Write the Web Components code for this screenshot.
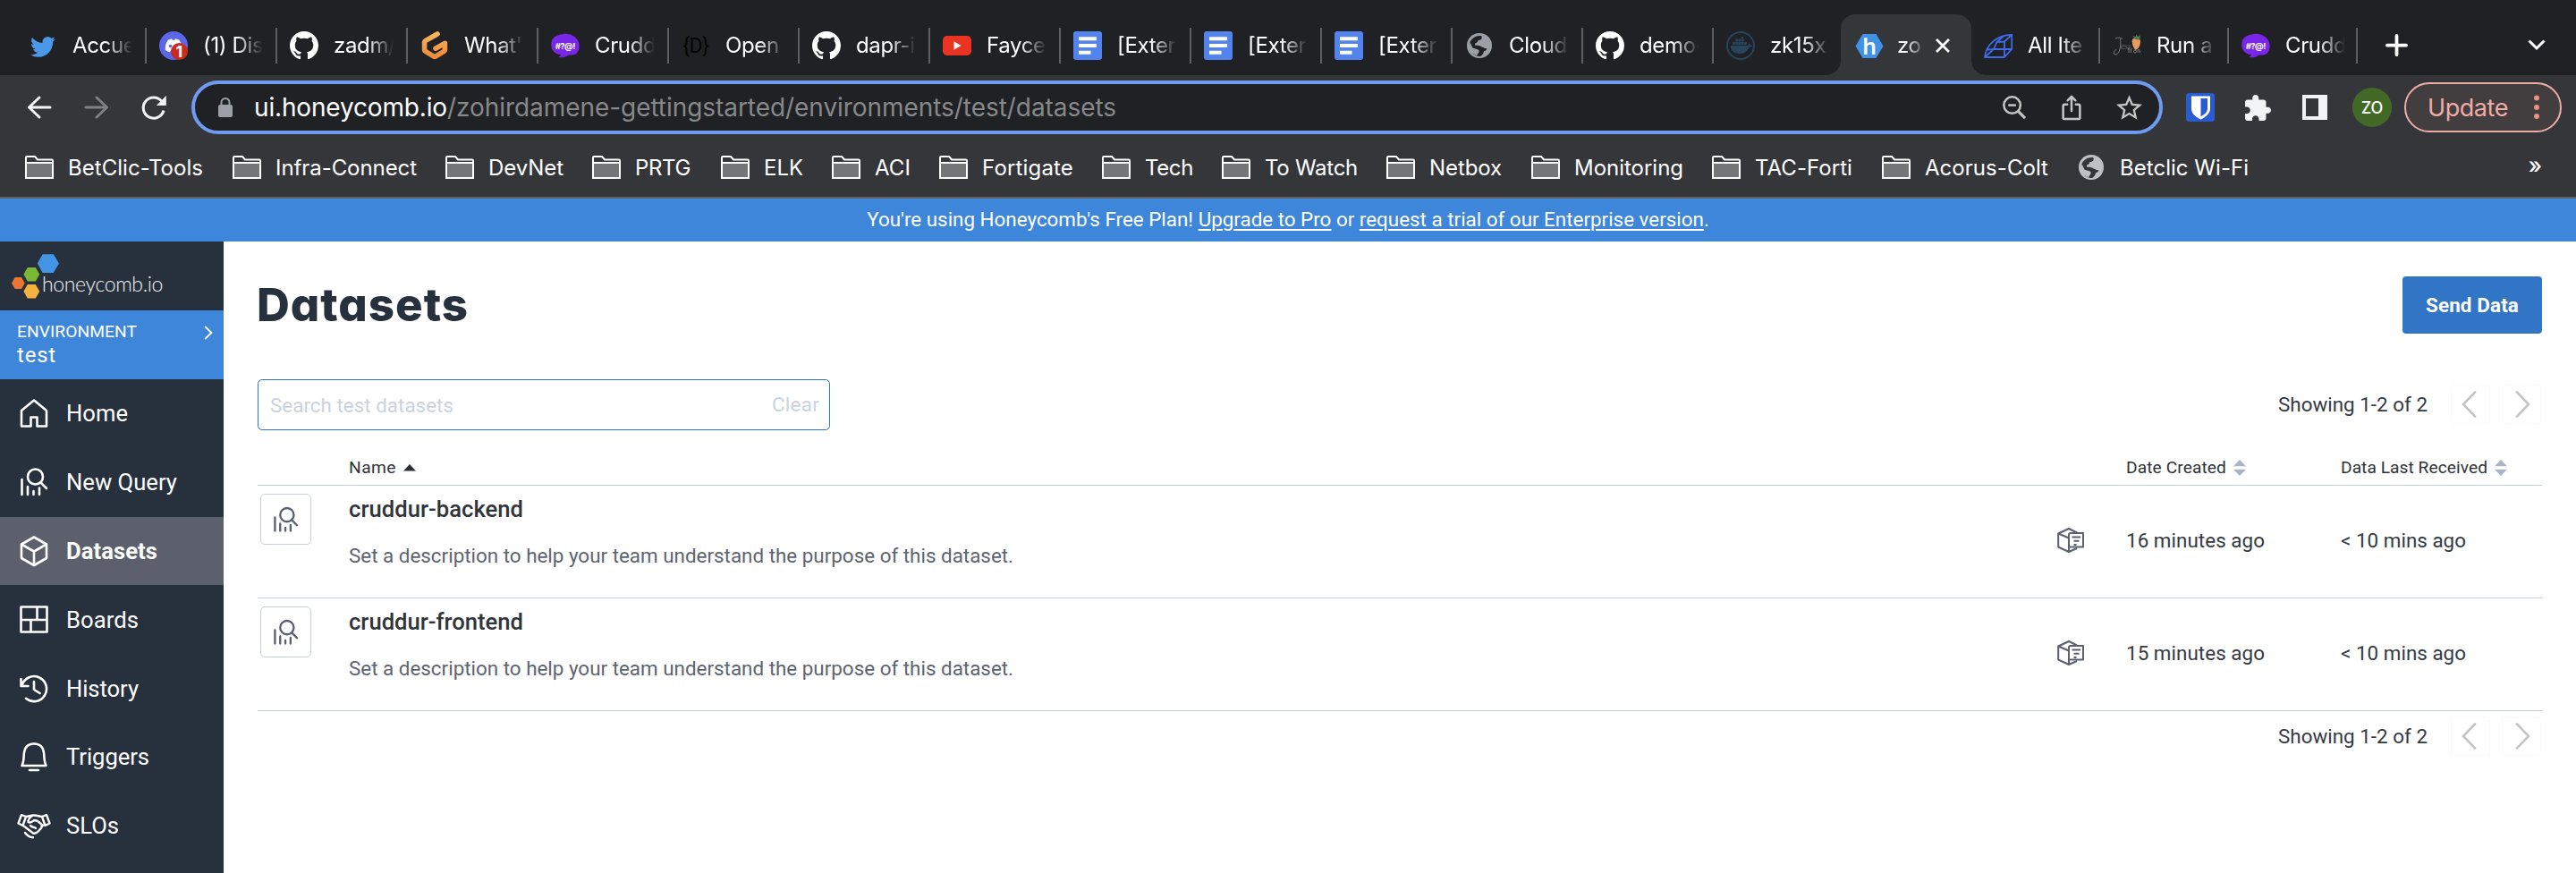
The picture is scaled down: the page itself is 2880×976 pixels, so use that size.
<!DOCTYPE html>
<html lang="en">
<head>
<meta charset="utf-8">
<title>Datasets | Honeycomb</title>
<style>
html,body{margin:0;padding:0;width:2880px;height:976px;overflow:hidden;background:#fff;font-family:Roboto,"Liberation Sans",sans-serif}
</style>
</head>
<body>
<honey-screen></honey-screen>
<script>
const ICONS = {
twitter:['0 0 32 32','<path transform="translate(2 3.4) scale(1.165)" fill="#4a99e9" d="M23.953 4.57a10 10 0 01-2.825.775 4.958 4.958 0 002.163-2.723c-.951.555-2.005.959-3.127 1.184a4.92 4.92 0 00-8.384 4.482C7.69 8.095 4.067 6.13 1.64 3.162a4.822 4.822 0 00-.666 2.475c0 1.71.87 3.213 2.188 4.096a4.904 4.904 0 01-2.228-.616v.06a4.923 4.923 0 003.946 4.827 4.996 4.996 0 01-2.212.085 4.936 4.936 0 004.604 3.417 9.867 9.867 0 01-6.102 2.105c-.39 0-.779-.023-1.17-.067a13.995 13.995 0 007.557 2.209c9.053 0 13.998-7.496 13.998-13.985 0-.21 0-.42-.015-.63A9.935 9.935 0 0024 4.59z"/>'],
discord:['0 0 32 32','<circle cx="16" cy="16" r="16" fill="#5b66ea"/><path fill="#fff" d="M10 9.5l4-1.2.8 1.4h2.6l.8-1.4 4 1.2c2.400 3.500 3.300 7 3 11.500-2 1.500-3.600 2-5 2.300l-1.200-2H13l-1.200 2c-1.500-.3-3.200-1-5-2.300-.3-4.500.7-8.200 3.200-11.500z"/><circle cx="12.600" cy="16.500" r="1.800" fill="#5b66ea"/><circle cx="22.500" cy="22.500" r="9.500" fill="#cb2a20"/><text x="22.300" y="28.800" text-anchor="middle" font-size="18" font-weight="700" font-family="Inter,sans-serif" fill="#fff">1</text>'],
github:['0 0 16 16','<path fill="#fff" d="M8 0C3.580 0 0 3.580 0 8c0 3.540 2.290 6.530 5.470 7.590.4.070.55-.17.55-.38 0-.19-.01-.82-.01-1.490-2.010.37-2.530-.49-2.690-.94-.09-.23-.48-.94-.82-1.130-.28-.15-.68-.52-.01-.53.63-.01 1.080.58 1.230.82.72 1.210 1.870.87 2.330.66.070-.52.28-.87.51-1.070-1.780-.2-3.640-.89-3.640-3.950 0-.87.31-1.590.82-2.150-.08-.2-.36-1.020.08-2.120 0 0 .67-.21 2.200.82.640-.18 1.320-.27 2-.27.680 0 1.360.090 2 .27 1.530-1.040 2.200-.82 2.200-.82.440 1.100.16 1.920.08 2.120.51.56.82 1.270.82 2.150 0 3.070-1.870 3.750-3.650 3.950.29.25.54.73.54 1.480 0 1.070-.01 1.930-.01 2.200 0 .21.15.46.55.38A8.013 8.013 0 0016 8c0-4.420-3.580-8-8-8z"/>'],
gitpod:['0 0 32 32','<defs><linearGradient id="g" x1="0" y1="0" x2="0" y2="1"><stop offset="0" stop-color="#f6b45e"/><stop offset="1" stop-color="#ee8a3a"/></linearGradient></defs><path fill="none" stroke="url(#g)" stroke-width="5.600" stroke-linejoin="round" stroke-linecap="round" d="M19 3L5.600 10.600a2 2 0 00-1 1.700v8.400a2 2 0 001 1.700l9.400 5.700q1 .6 2 0l9.400-5.700a2 2 0 001-1.700v-7.300l-10.400 5.800"/>'],
crud:['0 0 32 32','<path fill="#7a26e8" d="M13 3.200C18 2 27 4 30.500 11 33 17 31 23.500 27 25.800c-3 1-5 .5-8 1 -2 2-6 3-11 2 2-.5 3-1.500 2.800-2.800C4 25.500 0 21 .3 14.500.3 8 4 4.500 13 3.200z"/><text x="15.800" y="19.500" text-anchor="middle" font-size="9.500" font-weight="700" font-family="Inter,sans-serif" letter-spacing="-.5" fill="#fff">#?@!</text>'],
dbrace:['0 0 32 32','<text x="16" y="24" text-anchor="middle" font-size="23" font-family="Roboto,sans-serif" fill="#050505">{D}</text>'],
youtube:['0 0 32 32','<rect y="5" width="32" height="22" rx="5" fill="#e93323"/><path fill="#fff" d="M12.500 11.300v9.400l8-4.700z"/>'],
docs:['0 0 32 32','<rect width="32" height="32" rx="3" fill="#5383ec"/><path fill="#fff" d="M6 6.300h20v4H6zM6 14h20v4H6zM6 21.800h13.500v4H6z"/>'],
globe:['2 2 20 20','<path d="M12 2a10 10 0 100 20 10 10 0 000-20z"/><path fill="var(--hole)" d="M13.600 4.200C14.500 7 13 7.600 11 7.800c-.6 1.700-1 2.200-2.500 2.400v1.600c2.300-.2 4 .1 5.500 1.300 1.500.6 2.400 1.600 4 1.100-.3 1.800-1.500 2-2.400 2.300-.3 2-1.500 3.200-2.800 4-3 .1-5.400-1.200-7-3.400.8-.4 1.700-.2 2.600.1.8-.7.3-2-.4-2.700L4 13C3.200 8.300 7.800 3.500 13.600 4.200z"/><path d="M4.600 9.500l2 4.200c1.500 1 4 .6 5 2 .6 1.600-1 2.500-1.700 4.500l-5-3-1.500-5z"/>'],
docker:['0 0 32 32','<g fill="#27455c"><circle cx="16" cy="16" r="15" fill="none" stroke="#27455c" stroke-width="2"/><path d="M4.500 16h20c.2-1 1-2 1.200-2.500 1 .5 1.300 1.500 1.300 2 1 0 1.500.3 2 .7-.6 1.300-2 1.600-3.300 1.600-2 5.200-6 7.200-11 7.200-6 0-9.500-3-10.200-9z"/><path d="M7 12h2.800v3H7zm3.300 0h2.800v3h-2.800zm3.300 0h2.800v3h-2.800zm3.300 0h2.800v3h-2.800zm3.200 0h2.800v3h-2.800zM13.600 8.500h2.800v3h-2.800zm3.300 0h2.800v3h-2.800zm-6.600 0h2.800v3h-2.800zm6.600-2.600h2.200v2.100h-2.200z"/></g>'],
hex:['0 0 32 32','<path fill="#3f92e4" d="M8.500 3h15L31.500 16.500 23.500 30h-15L.5 16.500z"/><text x="16" y="25.500" text-anchor="middle" font-size="25" font-weight="600" font-family="Inter,sans-serif" fill="#fff">h</text>'],
bow:['0 0 32 32','<path fill="none" stroke="#3f6be8" stroke-width="1.800" stroke-linejoin="round" d="M1 29C2 16 14 4 31.200 3.800v16L23 29zM23 29V11.500L31.200 3.800M1 29L11 20M11 20L14.500 12 23 11.500M11 20h12l8-.2M14.500 12L23 4.600M3.500 20.500l8-.5"/>'],
carrot:['0 0 32 32','<path fill="none" stroke="#7a7a7a" stroke-width="1" d="M3 8c3-1.500 6-1 8 .5M8.500 8.500C9.500 16 8 26 3 26c-3-.5-2-4 1.500-6"/><text x="9" y="20" font-size="10" font-style="italic" font-family="Lato,sans-serif" font-weight="300" fill="#888">ess</text><path fill="#e99a5c" d="M22 9c3-2.500 8-1.500 9 1.500 0 6-2 9-5.500 10.500C22.500 18 21 12 22 9z"/><path fill="#4d7d57" d="M25 9l-2.500-4 3 1 1-2.500 1.500 2.500 3-1.500-1 5z"/><path fill="none" stroke="#777" stroke-width="1" d="M18 18v6M16.500 20h3M20.500 24v-3.500q0-1 1.500-.8M23.500 22.500a1.500 1.500 0 103 0 1.500 1.500 0 10-3 0M28 24v-3q2.500-1.500 2.500 1v2"/>'],
plus:['0 0 24 24','<path stroke="currentColor" stroke-width="3.600" stroke-linecap="round" d="M12 1.800v20.400M1.800 12h20.400"/>'],
close:['0 0 16 16','<path stroke="currentColor" stroke-width="2.800" d="M1 1l14 14M15 1L1 15"/>'],
down:['0 0 20 12','<path fill="none" stroke="currentColor" stroke-width="3" d="M1.500 1.500L10 10l8.500-8.500"/>'],
back:['0 0 28 26','<path fill="none" stroke="currentColor" stroke-width="3" stroke-linecap="round" stroke-linejoin="round" d="M26 13H2.500M14 2L2.500 13 14 24"/>'],
fwd:['0 0 28 26','<path fill="none" stroke="currentColor" stroke-width="3" stroke-linecap="round" stroke-linejoin="round" d="M2 13h23.500M14 2l11.500 11L14 24"/>'],
reload:['0 0 28 28','<path fill="none" stroke="currentColor" stroke-width="3" d="M25 17.500A11.600 11.600 0 1122.800 7.200"/><path fill="currentColor" d="M27.800 1v11H16.800z"/>'],
lock:['0 0 16 22','<rect y="8" width="16" height="14" rx="2" fill="#9aa0a6"/><path fill="none" stroke="#9aa0a6" stroke-width="2" d="M3.500 9V5.500a4.500 4.500 0 019 0V9"/>'],
zoomout:['0 0 28 28','<g fill="none" stroke="currentColor" stroke-width="2.600"><circle cx="11" cy="11" r="9.600"/><path d="M6.500 11h9"/><path stroke-width="3.200" d="M17.500 17.500l8.500 8.500"/></g>'],
share:['0 0 22 30','<g fill="none" stroke="currentColor" stroke-width="2.600" stroke-linecap="round" stroke-linejoin="round"><path d="M6 11H3.300a2 2 0 00-2 2v13a2 2 0 002 2h15.400a2 2 0 002-2V13a2 2 0 00-2-2H16M11 18.500V3M6.500 6.500L11 2l4.500 4.500"/></g>'],
star:['2 2 20 19','<path fill="currentColor" d="M22 9.240l-7.190-.62L12 2 9.190 8.630 2 9.240l5.460 4.730L5.820 21 12 17.270 18.180 21l-1.630-7.030L22 9.240zM12 15.400l-3.760 2.270 1-4.280-3.320-2.880 4.380-.38L12 6.100l1.710 4.040 4.380.38-3.320 2.880 1 4.280L12 15.400z"/>'],
warden:['0 0 32 32','<rect width="32" height="32" rx="4" fill="#2b5bd1"/><path fill="#fff" d="M6 3.500h21V17c0 6-5 10-10.500 12.500C10.500 27 6 23 6 17z"/><path fill="#2b5bd1" d="M16.500 6H24v11.500c0 4-3.500 6.500-7.500 8.700z"/>'],
puzzle:['2 1 21 21','<path fill="#f1f3f4" d="M20.500 11H19V7c0-1.100-.9-2-2-2h-4V3.500C13 2.120 11.880 1 10.500 1S8 2.120 8 3.500V5H4c-1.100 0-1.990.9-1.990 2v3.800H3.500c1.490 0 2.700 1.210 2.700 2.700s-1.210 2.700-2.700 2.700H2V20c0 1.100.9 2 2 2h3.800v-1.500c0-1.490 1.210-2.700 2.700-2.700 1.490 0 2.700 1.210 2.700 2.700V22H17c1.100 0 2-.9 2-2v-4h1.500c1.380 0 2.500-1.120 2.500-2.500S21.880 11 20.500 11z"/>'],
panel:['0 0 28 28','<path fill="#f1f3f4" fill-rule="evenodd" d="M0 0h28v28H0zM4 4v20h14V4z"/>'],
dots:['0 0 6 28','<g fill="#ee8f83"><circle cx="3" cy="3.500" r="3"/><circle cx="3" cy="14" r="3"/><circle cx="3" cy="24" r="3"/></g>'],
folder:['0 0 32 26','<path fill="#35363a" stroke="#fff" stroke-width="2" stroke-linejoin="round" d="M1 2.200A1.200 1.200 0 012.200 1H11l3 3.500h15.800A1.200 1.200 0 0131 5.700v18.100a1.200 1.200 0 01-1.200 1.200H2.200A1.200 1.200 0 011 23.800z"/><path fill="#747577" stroke="#fff" stroke-width="2" d="M1 8h30v17H1z"/>'],
logo:['0 0 54 52','<path fill="#4396e6" d="M34.600 .2h12.200L53 10.600 46.800 21H34.600L28.800 10.600z"/><path fill="#7bb934" d="M17.800 15h9l4.400 7.800-4.400 7.800h-9L13.400 22.800z"/><path fill="#e87532" d="M3.600 26h7.500l3.600 6.500-3.600 6.500H3.600L0 32.500z"/><path fill="#f4b340" d="M17.800 34h9l4.400 7.800-4.400 7.800h-9l-4.400-7.800z"/>'],
right:['0 0 10 16','<path fill="none" stroke="#fff" stroke-width="1.800" d="M1.200 1l7.200 7-7.200 7"/>'],
home:['0 0 38 38','<path d="M5 15.500L19 4l14 11.500V33H22.500V23h-7v10H5z" transform="translate(0 .5)"/>'],
query:['0 0 38 38','<circle cx="20.500" cy="13" r="8.500"/><path d="M26.500 19.500l6.500 6.500M5.500 16v17M12 24v9M18.500 29v4M25 25.500v7.500"/>'],
cube:['0 0 38 38','<path d="M19 3.500l14 8v15.500l-14 8-14-8V11.500zM5 11.500l14 8 14-8M19 19.500V35"/>'],
boards:['0 0 38 38','<path d="M4.500 4.500h29v28h-29zM4.500 19h29M22.500 4.500V19M15.500 19v13.500"/>'],
history:['0 0 38 38','<path d="M4.500 8v8h8M5.500 15.500A14 14 0 1110 29.800M19 11v9l6.500 4" />'],
bell:['0 0 38 38','<path d="M5.500 29h27c-1.500-3-2-6-2.200-11.500C30 9 26 4.500 19 4.500S8 9 7.700 17.500C7.500 23 7 26 5.500 29zM14 34h10"/>'],
shake:['0 0 38 38','<g stroke-width="2.400"><path d="M5 7L1.500 16.500 6.500 19 10 9zM33 7l3.500 9.500-5 2.500L28 9zM10 9c3 0 5.500-1.500 8-1.500M28 9c-3.500 0-6-2-10-1.500-3 1.500-6 5-5.500 7.500 2.500 1.500 4.500 0 6.500-2 2 0 5 1 7 3.500 2 1.500 3 2 1.500 4.500-3.500 5-6.500 7.500-9.500 6.500L7 19M27.500 19.500l4-1.500M15 19c2 2.500 4 1 6 3M9 27c2.500 3.500 6 5.200 9 5.200"/></g>'],
prev:['0 0 17 32','<path fill="none" stroke="#c3c4c6" stroke-width="2.600" stroke-linecap="square" d="M15 2.500L2 16l13 13.500"/>'],
next:['0 0 17 32','<path fill="none" stroke="#c3c4c6" stroke-width="2.600" stroke-linecap="square" d="M2 2.500L15 16 2 29.500"/>'],
up:['0 0 14 8','<path fill="#2b2f36" d="M7 0l7 7.500H0z"/>'],
sort:['0 0 14 18','<path fill="#a9b4c6" d="M7 0l7 7.200H0zM7 18l7-7.200H0z"/>'],
boxdoc:['0 0 30 28','<g fill="none" stroke="#5a6070" stroke-width="2" stroke-linejoin="round"><path d="M22 5.500L13 1 1.200 6.500v15L13 27l9-4M1.200 6.500L13 11.500M13 11.500V27"/><path fill="#fff" d="M15 6h14v15.500H13V8q0-2 2-2z"/><path d="M16.500 10.500h9.500M18.500 14.800h6M18.500 19h3"/></g>']
};
class Base extends HTMLElement{
  constructor(){super();this.attachShadow({mode:'open'});}
  a(n,d=''){return this.getAttribute(n)??d;}
  connectedCallback(){this.shadowRoot.innerHTML=`<style>*{box-sizing:border-box}${this.css()}</style>${this.html()}`;this.ready&&this.ready();}
}
class UiIcon extends Base{
  css(){return `:host{display:block;flex:none;width:${this.a('w')}px;height:${this.a('h',this.a('w'))}px}svg{display:block;width:100%;height:100%;overflow:visible;fill:currentColor}.line{fill:none;stroke:currentColor;stroke-width:2.600;stroke-linecap:round;stroke-linejoin:round}`}
  html(){const n=this.a('name'),[v,c]=ICONS[n];const l=['home','query','cube','boards','history','bell','shake'].includes(n);
    return `<svg viewBox="${v}" class="${l?'line':''}">${c}</svg>`}
}
/* Text run whose tracking is adjusted to span a given width. */
class FitText extends Base{
  css(){return ':host{display:inline-block;flex:none;white-space:pre}span{display:inline-block}'}
  html(){return '<span><slot></slot></span>'}
  ready(){const s=this.shadowRoot.querySelector('span'),n=this.textContent.length,w=+this.a('w');
    if(!w)return;s.style.letterSpacing=(w-s.getBoundingClientRect().width)/n+'px';this.style.width=w+'px';}
}
class BrowserTab extends Base{
  css(){const on=this.hasAttribute('active');return `:host{display:flex;position:relative;flex:none;align-items:center;width:${this.a('w','146')}px;height:68px;padding:1px 0 0 ${on?16:14}px;color:#fff;font:24px Inter,sans-serif;letter-spacing:-.35px;--hole:#202124;${on?'background:#35363a;border-radius:16px 16px 0 0;':''}}
  .t{flex:none;width:${on?28:67}px;margin-left:${on?15:17}px;overflow:hidden;white-space:nowrap;-webkit-mask-image:linear-gradient(90deg,#000 ${on?30:55}%,transparent ${on?115:100}%)}
  .s{position:absolute;right:0;top:15px;width:2px;height:40px;background:#5f6063}
  ui-icon{color:#9aa0a6}.x{color:#fff;margin-left:15px}
  .c{position:absolute;bottom:0;width:16px;height:16px}.l{left:-16px;background:radial-gradient(circle at 0 0,transparent 15.500px,#35363a 16px)}.r{right:-16px;background:radial-gradient(circle at 100% 0,transparent 15.500px,#35363a 16px)}`}
  html(){const on=this.hasAttribute('active'),g=this.a('icon')=='globe';return `<ui-icon name="${this.a('icon')}" w="${g?28:32}" ${g?'style="margin:0 2px"':''}></ui-icon><div class="t"><slot></slot></div>`+
   (on?'<ui-icon class="x" name="close" w="16"></ui-icon><i class="c l"></i><i class="c r"></i>':this.hasAttribute('last')?'':'<i class="s"></i>')}
}
class TabStrip extends Base{
  css(){return ':host{display:flex;height:84px;background:#202124;padding:16px 34px 0 18px;color:#fff}.p{margin:22px 0 0 31px}.d{margin:28px 0 0 auto}.wrap{display:flex}'}
  html(){const L=[['twitter','Accue'],['discord','(1) Dis'],['github','zadm/'],['gitpod',"What'"],['crud','Crudd'],['dbrace','Open'],['github','dapr-i'],['youtube','Fayce'],['docs','[Exter'],['docs','[Exter'],['docs','[Exter'],['globe','Cloud'],['github','demo-']];
   return '<div class="wrap">'+L.map(t=>`<browser-tab icon="${t[0]}">${t[1]}</browser-tab>`).join('')+'<browser-tab icon="docker" w="142" last>zk15x</browser-tab><browser-tab icon="hex" w="146" active>zo</browser-tab><browser-tab icon="bow" w="144">All Ite</browser-tab><browser-tab icon="carrot" w="144">Run a</browser-tab><browser-tab icon="crud" w="144">Crudd</browser-tab></div><ui-icon class="p" name="plus" w="25"></ui-icon><ui-icon class="d" name="down" w="20" h="12"></ui-icon>'}
}
class BrowserToolbar extends Base{
  css(){return `:host{display:flex;align-items:center;height:72px;background:#35363a;padding:0 16px 0 30px;color:#f1f3f4;font:28px Inter,sans-serif}
  .omni{display:flex;align-items:center;width:2204px;height:60px;margin-left:28px;border:4px solid #6f9cf0;border-radius:30px;background:#202124;padding:0 19px 0 26px;color:#c4c4c4}
  .u{margin-left:24px;color:#fff}.p{color:#87888a}.sp{flex:1}
  .av{display:flex;align-items:center;justify-content:center;width:44px;height:44px;border-radius:50%;background:#426a26;color:#fff;font-size:18px;margin-left:28px;font-weight:500}
  .up{display:flex;align-items:center;width:176px;height:56px;border:2px solid #efaca5;border-radius:28px;background:#423d3f;color:#efaca5;margin-left:14px;padding-left:24px;font-size:27px}`}
  html(){return `<ui-icon name="back" w="28" h="26"></ui-icon><ui-icon name="fwd" w="28" h="26" style="margin-left:36px;color:#7f8083"></ui-icon><ui-icon name="reload" w="28" style="margin-left:36px"></ui-icon>
  <div class="omni"><ui-icon name="lock" w="16" h="22"></ui-icon><fit-text class="u" w="216">ui.honeycomb.io</fit-text><fit-text class="p" w="748">/zohirdamene-gettingstarted/environments/test/datasets</fit-text><div class="sp"></div>
  <ui-icon name="zoomout" w="27" style="margin-right:39px"></ui-icon><ui-icon name="share" w="22" h="29" style="margin-right:39px"></ui-icon><ui-icon name="star" w="29" h="28"></ui-icon></div>
  <ui-icon name="warden" w="32" style="margin-left:26px"></ui-icon><ui-icon name="puzzle" w="29" style="margin-left:34px"></ui-icon><ui-icon name="panel" w="28" style="margin-left:35px"></ui-icon>
  <div class="av">ZO</div><div class="up"><fit-text w="90">Update</fit-text><ui-icon name="dots" w="6" h="28" style="margin-left:29px"></ui-icon></div>`}
}
class BookmarkItem extends Base{
  css(){return `:host{display:flex;align-items:center;flex:none;width:${this.a('span')}px;color:#fff;font:24px Inter,sans-serif;--hole:#35363a}fit-text{margin-left:16px}`}
  html(){const g=this.hasAttribute('globe');return (g?'<ui-icon name="globe" w="28" style="margin-right:2px;color:#bdc1c6"></ui-icon>':'<ui-icon name="folder" w="32" h="26"></ui-icon>')+`<fit-text w="${this.a('w')}">${this.textContent}</fit-text>`}
}
class BookmarkBar extends Base{
  css(){return ':host{display:flex;align-items:center;height:66px;background:#35363a;border-bottom:2px solid #5f6164;padding:0 38px 2px 28px;color:#fff;font:500 25px Inter,sans-serif}.m{margin-left:auto;margin-top:-4px}'}
  html(){return [['BetClic-Tools',151,232],['Infra-Connect',158,238],['DevNet',84,164],['PRTG',62,144],['ELK',44,124],['ACI',40,120],['Fortigate',102,182],['Tech',54,134],['To Watch',104,184],['Netbox',81,162],['Monitoring',122,202],['TAC-Forti',109,190],['Acorus-Colt',138,220]].map(b=>`<bookmark-item w="${b[1]}" span="${b[2]}">${b[0]}</bookmark-item>`).join('')+'<bookmark-item globe w="144" span="200">Betclic Wi-Fi</bookmark-item><span class="m">»</span>'}
}
class PlanBanner extends Base{
  css(){return ':host{display:flex;justify-content:center;align-items:center;height:48px;background:#3d86d9;color:#fff;font-size:22.400px;padding-bottom:2px}a{text-decoration:underline;text-underline-offset:3px;text-decoration-thickness:2px}'}
  html(){return '<div>You\'re using Honeycomb\'s Free Plan! <a>Upgrade to Pro</a> or <a>request a trial of our Enterprise version</a>.</div>'}
}
class NavItem extends Base{
  css(){const on=this.hasAttribute('active');return `:host{display:flex;align-items:center;height:76.800px;padding-left:19px;color:#fff;font-size:25.600px;${on?'background:#5b606c;font-weight:700':''}}fit-text{margin-left:17px}`}
  html(){return `<ui-icon name="${this.a('icon')}" w="38"></ui-icon><fit-text w="${this.a('w')}">${this.textContent}</fit-text>`}
}
class SideBar extends Base{
  css(){return `:host{display:block;width:250px;height:706px;flex:none;background:#27303d;color:#fff;overflow:hidden}
  .logo{display:flex;height:77px;padding:14px 0 0 13px}.logo fit-text{font:300 23px/30px Lato,sans-serif;margin:18px 0 0 -20px;color:#f3f4f5}
  .env{display:flex;justify-content:space-between;height:77px;background:#3d86d9;padding:11px 12px 0 19px}
  .e{font-size:19.200px;line-height:25px;display:block}.t{font-size:24px;line-height:28px;display:block}.env ui-icon{margin-top:6px}`}
  html(){return `<div class="logo"><ui-icon name="logo" w="54" h="52"></ui-icon><fit-text w="135">honeycomb.io</fit-text></div>
  <div class="env"><div><fit-text class="e" w="134">ENVIRONMENT</fit-text><fit-text class="t" w="44">test</fit-text></div><ui-icon name="right" w="10" h="16"></ui-icon></div>
  <nav-item icon="home" w="69">Home</nav-item><nav-item icon="query" w="124">New Query</nav-item><nav-item icon="cube" w="102" active>Datasets</nav-item><nav-item icon="boards" w="81">Boards</nav-item><nav-item icon="history" w="81">History</nav-item><nav-item icon="bell" w="93">Triggers</nav-item><nav-item icon="shake" w="59">SLOs</nav-item>`}
}
class PageNav extends Base{
  css(){return ':host{display:flex;align-items:center;height:44px;color:#343a43;font-size:22.400px;margin-top:-1px}.b{display:flex;align-items:center;justify-content:center;width:44px;height:44px;border:1px solid #fafafa;border-radius:4px;margin-right:13px;padding-right:3px}.b+.b{margin-right:1px;padding:0 0 0 3px}fit-text{margin-right:26px}'}
  html(){return '<fit-text w="167">Showing 1-2 of 2</fit-text><div class="b"><ui-icon name="prev" w="17" h="32"></ui-icon></div><div class="b"><ui-icon name="next" w="17" h="32"></ui-icon></div>'}
}
const GRID='grid-template-columns:102px 1fr 79px 240px 225px';
class DatasetRow extends Base{
  css(){return `:host{display:grid;${GRID};height:126px;border-bottom:1px solid #c5cede;color:#343a43;font-size:22.400px}
  .q{display:flex;align-items:center;justify-content:center;width:57px;height:57px;margin:9px 0 0 3px;border:1px solid #c8d0e0;border-radius:5px;color:#5a6070}
  .n{display:block;font-weight:500;font-size:25.600px;line-height:30px;margin-top:11px;color:#30343b}
  .d{display:block;line-height:30px;margin-top:22px;color:#5d6470}
  .c{display:flex;align-items:center;padding-bottom:3px}`}
  html(){return `<div><div class="q"><ui-icon name="query" w="35" h="34"></ui-icon></div></div><div><fit-text class="n" w="195">${this.a('name')}</fit-text><fit-text class="d" w="743">Set a description to help your team understand the purpose of this dataset.</fit-text></div>
  <div class="c"><ui-icon name="boxdoc" w="30" h="28" style="margin-left:2px"></ui-icon></div><div class="c"><fit-text w="155">${this.a('created')}</fit-text></div><div class="c"><fit-text w="140">&lt; 10 mins ago</fit-text></div>`}
}
class DatasetTable extends Base{
  css(){return `:host{display:block}.h{display:grid;${GRID};height:62px;align-items:end;border-bottom:1px solid #c5cede;padding-bottom:7px;font-size:19.200px;line-height:24px;color:#2f3338}.h div{display:flex;align-items:center}.h ui-icon{margin-left:8px}`}
  html(){return `<div class="h"><div></div><div><fit-text w="53">Name</fit-text><ui-icon name="up" w="14" h="8"></ui-icon></div><div></div><div><fit-text w="112">Date Created</fit-text><ui-icon name="sort" w="14" h="18"></ui-icon></div><div><fit-text w="164">Data Last Received</fit-text><ui-icon name="sort" w="14" h="18"></ui-icon></div></div>
  <dataset-row name="cruddur-backend" created="16 minutes ago"></dataset-row><dataset-row name="cruddur-frontend" created="15 minutes ago"></dataset-row>`}
}
class DatasetsPage extends Base{
  css(){return `:host{display:block;flex:1;background:#fff;padding:39px 38px 0}
  .top,.tools{display:flex;justify-content:space-between;align-items:center}.top{height:64px}
  h1{margin:0 0 0 -1px;font:800 51px/64px Inter,sans-serif;color:#27303d;font-feature-settings:"cv11"}
  button{all:unset;display:flex;align-items:center;justify-content:center;width:156px;height:64px;border-radius:4px;background:#3175c7;color:#fff;font-size:22.400px;font-weight:700;padding-bottom:1px;box-sizing:border-box}
  .tools{margin-top:51px;height:57px}.s{display:flex;justify-content:space-between;align-items:center;width:640px;height:57px;border:1px solid #2f74c7;border-radius:5px;padding:1px 11px 0 13px;color:#cbd2e0;font-size:22.400px}
  .f{display:flex;justify-content:flex-end;margin-top:7px}`}
  html(){return `<div class="top"><h1><fit-text w="237">Datasets</fit-text></h1><button><fit-text w="104">Send Data</fit-text></button></div>
  <div class="tools"><div class="s"><fit-text w="205">Search test datasets</fit-text><fit-text w="53" style="margin-top:-2px">Clear</fit-text></div><page-nav></page-nav></div><dataset-table></dataset-table><div class="f"><page-nav></page-nav></div>`}
}
class HoneyScreen extends Base{
  css(){return ':host{display:block;width:2880px;height:976px;overflow:hidden}.a{display:flex}'}
  html(){return '<tab-strip></tab-strip><browser-toolbar></browser-toolbar><bookmark-bar></bookmark-bar><plan-banner></plan-banner><div class="a"><side-bar></side-bar><datasets-page></datasets-page></div>'}
}
Object.entries({'honey-screen':HoneyScreen,'tab-strip':TabStrip,'browser-tab':BrowserTab,'browser-toolbar':BrowserToolbar,'bookmark-bar':BookmarkBar,'bookmark-item':BookmarkItem,'plan-banner':PlanBanner,'side-bar':SideBar,'nav-item':NavItem,'datasets-page':DatasetsPage,'dataset-table':DatasetTable,'dataset-row':DatasetRow,'page-nav':PageNav,'ui-icon':UiIcon,'fit-text':FitText}).forEach(([n,c])=>customElements.define(n,c));
</script>
</body>
</html>
